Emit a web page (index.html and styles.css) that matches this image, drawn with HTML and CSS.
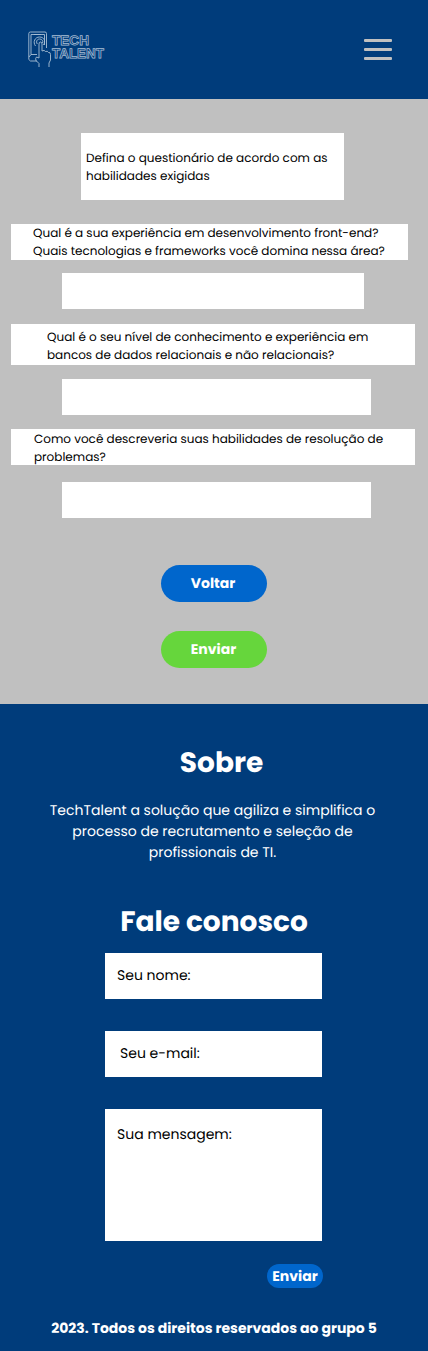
FILE: index.html
```html
<!DOCTYPE html>
<html lang="pt-BR">
<head>
<meta charset="utf-8">
<meta name="viewport" content="width=device-width, initial-scale=1">
<title>TechTalent</title>
<link rel="stylesheet" href="styles.css">
</head>
<body>
<header class="topbar">
  <svg class="logo" width="80" height="38" viewBox="0 0 80 38" role="img" aria-label="Tech Talent">
    <g class="logo-lines">
      <path d="M9 30H2.500L.8 28.500V2.500Q.8 1 2.500 1H17Q18.500 1 18.500 2.500V17"/>
      <path d="M3 23.500V3.500H16.500V14M3 23.500H9M1 26l2-2.500M6 3.500h7"/>
      <path d="M7.500 15C4.500 11 7 6 11.500 6S18 10 15.500 14M9.300 13C7.500 10 9.500 8 11.700 8S15.500 10 14.500 12"/>
      <path d="M11 36V32.500L8 29.500Q7 27.500 8.500 26L11 27V13Q11 11 12.500 11T14 13V20Q16.500 18.500 17.500 20.500Q19.500 19.500 20.500 21.500Q22.500 21 22.500 23.500V29L21 32V36"/>
    </g>
    <g class="logo-text">
      <text x="24" y="14.300" textLength="37" lengthAdjust="spacingAndGlyphs">TECH</text>
      <text x="24" y="27.400" textLength="52" lengthAdjust="spacingAndGlyphs">TALENT</text>
    </g>
  </svg>
  <button class="menu" aria-label="Menu"><span></span><span></span><span></span></button>
</header>

<main class="quiz">
  <h1 class="intro"><span>Defina o questionário de acordo com as</span><span>habilidades exigidas</span></h1>
  <p class="question q-front"><span>Qual é a sua experiência em desenvolvimento front-end?</span><span>Quais tecnologias e frameworks você domina nessa área?</span></p>
  <div class="answer a-front"></div>
  <p class="question q-data"><span>Qual é o seu nível de conhecimento e experiência em</span><span>bancos de dados relacionais e não relacionais?</span></p>
  <div class="answer a-data"></div>
  <p class="question q-solve"><span>Como você descreveria suas habilidades de resolução de</span><span>problemas?</span></p>
  <div class="answer a-solve"></div>
  <div class="actions">
    <button class="pill back">Voltar</button>
    <button class="pill send">Enviar</button>
  </div>
</main>

<footer class="footer">
  <h2 class="about-title">Sobre</h2>
  <p class="about"><span>TechTalent a solução que agiliza e simplifica o</span><span>processo de recrutamento e seleção de</span><span>profissionais de TI.</span></p>
  <h2 class="contact-title">Fale conosco</h2>
  <form class="contact">
    <div class="field">Seu nome:</div>
    <div class="field email">Seu e-mail:</div>
    <div class="field message">Sua mensagem:</div>
    <button type="button" class="submit">Enviar</button>
  </form>
  <p class="copyright">2023. Todos os direitos reservados ao grupo 5</p>
</footer>
</body>
</html>
```
FILE: styles.css
```css
* { box-sizing: border-box; }
body, h1, h2, p { margin: 0; }
body {
  width: 428px;
  font-family: Poppins, Inter, "Noto Sans", sans-serif;
  text-rendering: geometricPrecision;
  background: #003c7b;
  color: #000;
}
button { border: 0; padding: 0; font: inherit; text-rendering: inherit; }
.topbar {
  height: 99px;
  padding: 31px 36px 0 28px;
  display: flex;
  justify-content: space-between;
}
.logo-lines { fill: none; stroke: #a9bfd5; stroke-width: .9; stroke-linejoin: round; }
.logo-text { fill: #003c7b; stroke: #a9bfd5; stroke-width: .75; font: bold 13.500px "Liberation Sans", Arial, sans-serif; }
.menu {
  width: 28px;
  height: 20.500px;
  margin-top: 8px;
  background: none;
  display: flex;
  flex-direction: column;
  justify-content: space-between;
}
.menu span { height: 2.500px; border-radius: 1px; background: #c0c0c0; }

.quiz { height: 605px; padding-top: 34px; background: #c0c0c0; }
.intro, .question { font-size: 12px; font-weight: 400; line-height: 18px; background: #fff; }
.intro span, .question span, .about span { display: block; white-space: nowrap; }
.intro { width: 263px; height: 67px; margin-left: 81px; padding: 17px 0 0 5px; }
.question { margin-left: 11px; }
.q-front { width: 397px; height: 36px; margin-top: 24px; padding: 1px 0 0 22px; }
.q-data { width: 404px; height: 41px; margin-top: 15px; padding: 5px 0 0 36px; }
.q-solve { width: 404px; height: 36px; margin-top: 14px; padding: 2px 0 0 23px; }
.answer { width: 309px; height: 36px; margin-left: 62px; background: #fff; }
.a-front { width: 302px; margin-top: 13px; }
.a-data { margin-top: 14px; }
.a-solve { margin-top: 17px; }
.actions { display: flex; flex-direction: column; align-items: center; gap: 29px; margin-top: 47px; }
.pill { width: 106px; height: 37px; border-radius: 19px; color: #fff; font-size: 14px; font-weight: 700; line-height: 21px; }
.back { padding-right: 2px; background: #0066cc; }
.send { padding-right: 1px; background: #66d63c; }

.footer { height: 647px; color: #fff; padding-top: 38px; text-align: center; }
.footer h2 { font-size: 28px; font-weight: 700; line-height: 42px; }
.about-title { padding-left: 15px; }
.about { margin-top: 16px; padding-right: 3px; font-size: 14px; line-height: 21px; }
.contact-title { margin-top: 38px; }
.contact { width: 218px; margin: 10px 0 0 105px; display: flex; flex-direction: column; gap: 32px; text-align: left; }
.field { width: 217px; height: 46px; padding: 12px 12px 0; background: #fff; color: #000; font-size: 14px; line-height: 21px; }
.email { padding-left: 15px; }
.message { height: 132px; padding-top: 15px; }
.submit { width: 56px; height: 24px; margin-top: -9px; align-self: flex-end; border-radius: 12px; background: #0066cc; color: #fff; font-size: 14px; font-weight: 700; line-height: 21px; text-align: center; }
.copyright { margin-top: 30px; font-size: 14px; font-weight: 700; line-height: 21px; }
```
